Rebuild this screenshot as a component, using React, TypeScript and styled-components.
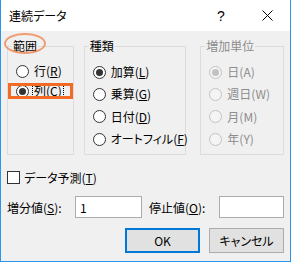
import React from "react";
import styled, { createGlobalStyle } from "styled-components";

const font = `"Noto Sans CJK JP", "Noto Sans", sans-serif`;

const GlobalStyle = createGlobalStyle`
  html, body {
    margin: 0;
    padding: 0;
    background: #ffffff;
  }
  body {
    font-family: ${font};
    font-size: 12px;
    color: #000000;
    font-feature-settings: "palt";
  }
`;

const Window = styled.div`
  width: 291px;
  height: 262px;
  box-sizing: border-box;
  border: 1px solid #2b95e9;
  border-top: none;
  display: flex;
  flex-direction: column;
  background: #f0f0f0;
`;

const TitleBar = styled.div`
  height: 31px;
  flex-shrink: 0;
  background: #ffffff;
  display: flex;
  align-items: center;
  padding-left: 8px;
`;

const Title = styled.div`
  flex: 1;
  font-size: 12px;
`;

const TitleButton = styled.div`
  width: 46px;
  height: 31px;
  display: flex;
  align-items: center;
  justify-content: center;
  font-size: 14px;
  font-family: "Liberation Sans", sans-serif;
`;

const Body = styled.div`
  flex: 1;
  padding: 7px 6px 0 6px;
  display: flex;
  flex-direction: column;
`;

const GroupsRow = styled.div`
  display: flex;
`;

const Group = styled.fieldset<{ $w: number; $ml?: number }>`
  width: ${(p) => p.$w}px;
  margin: 0 0 0 ${(p) => p.$ml ?? 0}px;
  height: 117px;
  box-sizing: border-box;
  padding: 7px 0 0 4px;
  border: 1px solid #dcdcdc;
  min-width: 0;
`;

const Legend = styled.legend<{ $disabled?: boolean; $circled?: boolean }>`
  position: relative;
  padding: 0 1px;
  line-height: 16px;
  font-size: 12px;
  color: ${(p) => (p.$disabled ? "#8d8d8d" : "#000000")};

  &::after {
    content: "";
    display: ${(p) => (p.$circled ? "block" : "none")};
    position: absolute;
    left: -8px;
    top: -5px;
    width: 42px;
    height: 21px;
    box-sizing: border-box;
    border: 2px solid rgba(240, 128, 70, 0.75);
    border-radius: 50%;
  }
`;

const Item = styled.div<{ $h: number; $disabled?: boolean; $highlight?: boolean }>`
  position: relative;
  display: flex;
  align-items: center;
  height: ${(p) => p.$h}px;
  margin-left: 4px;
  gap: 3px;
  white-space: nowrap;
  color: ${(p) => (p.$disabled ? "#8d8d8d" : "#000000")};

  &::before {
    content: "";
    display: ${(p) => (p.$highlight ? "block" : "none")};
    position: absolute;
    left: -8px;
    top: 2px;
    width: 65px;
    height: 16px;
    box-sizing: border-box;
    border: 3px solid #f36a24;
  }
`;

const RadioCircle = styled.span<{ $checked?: boolean; $disabled?: boolean }>`
  width: 13px;
  height: 13px;
  flex-shrink: 0;
  box-sizing: border-box;
  border-radius: 50%;
  border: 1px solid ${(p) => (p.$disabled ? "#c2c2c2" : "#333333")};
  background: ${(p) => (p.$disabled ? "#f4f4f4" : "#ffffff")};
  display: flex;
  align-items: center;
  justify-content: center;

  &::after {
    content: "";
    width: 7px;
    height: 7px;
    border-radius: 50%;
    background: ${(p) => (p.$disabled ? "#c2c2c2" : "#333333")};
    display: ${(p) => (p.$checked ? "block" : "none")};
  }
`;

const ItemLabel = styled.span<{ $focused?: boolean }>`
  line-height: 10px;
  padding: 0 1px;
  border: 1px dotted ${(p) => (p.$focused ? "#000000" : "transparent")};
`;

const CheckRow = styled.div`
  margin-top: 14px;
  height: 16px;
  display: flex;
  align-items: center;
  gap: 4px;
`;

const CheckBox = styled.span`
  width: 13px;
  height: 13px;
  box-sizing: border-box;
  border: 1px solid #333333;
  background: #ffffff;
`;

const InputRow = styled.div`
  margin-top: 11px;
  display: grid;
  grid-template-columns: 68px 67px 77px 65px;
  align-items: center;
`;

const FieldLabel = styled.span<{ $pl?: number }>`
  padding-left: ${(p) => p.$pl ?? 0}px;
  white-space: nowrap;
`;

const TextBox = styled.div`
  height: 22px;
  box-sizing: border-box;
  border: 1px solid #acacac;
  background: #ffffff;
  padding-left: 4px;
  display: flex;
  align-items: center;
  font-size: 12px;
`;

const ButtonRow = styled.div`
  margin-top: 10px;
  display: flex;
  justify-content: flex-end;
  gap: 9px;
`;

const Button = styled.div<{ $default?: boolean }>`
  width: 75px;
  height: 25px;
  box-sizing: border-box;
  background: #e1e1e1;
  border: ${(p) => (p.$default ? "2px solid #0078d7" : "1px solid #adadad")};
  display: flex;
  align-items: center;
  justify-content: center;
`;

const CloseIcon = () => (
  <svg width="11" height="11" viewBox="0 0 11 11">
    <path d="M0.5 0.5 L10.5 10.5 M10.5 0.5 L0.5 10.5" stroke="#000" strokeWidth="1" />
  </svg>
);

type Radio = {
  label: string;
  key?: string;
  checked?: boolean;
  focused?: boolean;
  highlight?: boolean;
};

const Label = ({ label, k }: { label: string; k?: string }) =>
  k ? (
    <>
      {label}(<u>{k}</u>)
    </>
  ) : (
    <>{label}</>
  );

const App: React.FC = () => {
  const range: Radio[] = [
    { label: "行", key: "R" },
    { label: "列", key: "C", checked: true, focused: true, highlight: true },
  ];
  const kinds: Radio[] = [
    { label: "加算", key: "L", checked: true },
    { label: "乗算", key: "G" },
    { label: "日付", key: "D" },
    { label: "オートフィル", key: "F" },
  ];
  const units = [
    { label: "日(A)", checked: true },
    { label: "週日(W)" },
    { label: "月(M)" },
    { label: "年(Y)" },
  ];

  return (
    <>
      <GlobalStyle />
      <Window>
        <TitleBar>
          <Title>連続データ</Title>
          <TitleButton>?</TitleButton>
          <TitleButton>
            <CloseIcon />
          </TitleButton>
        </TitleBar>
        <Body>
          <GroupsRow>
            <Group $w={67}>
              <Legend $circled>範囲</Legend>
              {range.map((r, i) => (
                <Item key={i} $h={20} $highlight={r.highlight}>
                  <RadioCircle $checked={r.checked} />
                  <ItemLabel $focused={r.focused}>
                    <Label label={r.label} k={r.key} />
                  </ItemLabel>
                </Item>
              ))}
            </Group>
            <Group $w={103} $ml={10}>
              <Legend>種類</Legend>
              {kinds.map((r, i) => (
                <Item key={i} $h={22.3}>
                  <RadioCircle $checked={r.checked} />
                  <ItemLabel>
                    <Label label={r.label} k={r.key} />
                  </ItemLabel>
                </Item>
              ))}
            </Group>
            <Group $w={84} $ml={14}>
              <Legend $disabled>増加単位</Legend>
              {units.map((r, i) => (
                <Item key={i} $h={22.3} $disabled>
                  <RadioCircle $checked={r.checked} $disabled />
                  <ItemLabel>{r.label}</ItemLabel>
                </Item>
              ))}
            </Group>
          </GroupsRow>
          <CheckRow>
            <CheckBox />
            <span>
              データ予測(<u>T</u>)
            </span>
          </CheckRow>
          <InputRow>
            <FieldLabel>
              増分値(<u>S</u>):
            </FieldLabel>
            <TextBox>1</TextBox>
            <FieldLabel $pl={7}>
              停止値(<u>O</u>):
            </FieldLabel>
            <TextBox />
          </InputRow>
          <ButtonRow>
            <Button $default>OK</Button>
            <Button>キャンセル</Button>
          </ButtonRow>
        </Body>
      </Window>
    </>
  );
};

export default App;
